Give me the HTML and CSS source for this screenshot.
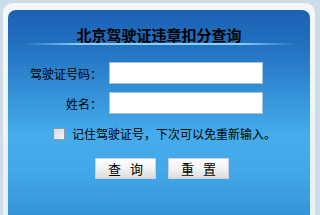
FILE: index.html
```html
<!DOCTYPE html>
<html lang="zh-CN">
<head>
    <meta charset="UTF-8">
    <title>北京驾驶证违章扣分查询</title>
    <link rel="stylesheet" href="styles.css">
</head>
<body>
    <div class="frame">
        <div class="panel">
            <h1 class="title">北京驾驶证违章扣分查询</h1>
            <div class="rule"></div>

            <form class="query-form">
                <div class="row">
                    <label for="license">驾驶证号码：</label>
                    <input type="text" id="license">
                </div>
                <div class="row">
                    <label for="name">姓名：</label>
                    <input type="text" id="name">
                </div>

                <div class="remember">
                    <input type="checkbox" id="remember">
                    <label for="remember">记住驾驶证号，下次可以免重新输入。</label>
                </div>

                <div class="buttons">
                    <button type="submit">查 询</button>
                    <button type="reset">重 置</button>
                </div>
            </form>
        </div>
    </div>
</body>
</html>
```

FILE: styles.css
```css
/* Base */
html, body {
    margin: 0;
    padding: 0;
    height: 215px;
    overflow: hidden;
    background: #cfdce8;
    font-family: "Noto Sans CJK SC", "Liberation Sans", sans-serif;
}

/* Outer light frame */
.frame {
    margin: 3px 5px 0 3px;
    padding: 7px 5px 0 5px;
    background: linear-gradient(to bottom, #f4f8fb, #e8eff5);
    border-radius: 10px 10px 0 0;
}

/* Blue panel */
.panel {
    height: 205px;
    border-radius: 8px 8px 0 0;
    background: linear-gradient(to bottom,
        #1b61b3 0px,
        #2373c2 40px,
        #3592d8 85px,
        #45aceb 125px,
        #43a8e8 160px,
        #3594d9 205px);
    overflow: hidden;
}

.title {
    margin: 0;
    padding-top: 16px;
    font-size: 15px;
    line-height: 17px;
    font-weight: bold;
    color: #000;
    text-align: center;
}

.rule {
    height: 2px;
    margin: 0 15px 0 16px;
    background: linear-gradient(to right, rgba(140, 205, 250, 0), #8ccdfa 20%, #8ccdfa 80%, rgba(140, 205, 250, 0));
}

/* Form */
.query-form {
    padding-top: 17px;
}

.row {
    display: flex;
    align-items: center;
    gap: 7px;
    padding-left: 14px;
    margin-bottom: 8px;
}

.row label {
    width: 80px;
    text-align: right;
    font-size: 12px;
    color: #000;
}

.row input {
    box-sizing: border-box;
    width: 154px;
    height: 22px;
    margin: 0;
    border: 1px solid #a9c0d2;
    background: #fff;
    font-size: 12px;
}

.remember {
    display: flex;
    align-items: center;
    gap: 7px;
    padding-left: 45px;
    margin-top: 11px;
    font-size: 12px;
    color: #000;
}

.remember input {
    appearance: none;
    -webkit-appearance: none;
    box-sizing: border-box;
    width: 12px;
    height: 12px;
    margin: 0;
    border: 1px solid #8c99a6;
    background: linear-gradient(135deg, #d4d8dc, #f4f5f6);
}

.buttons {
    display: flex;
    gap: 12px;
    padding-left: 87px;
    margin-top: 16px;
}

.buttons button {
    box-sizing: border-box;
    width: 61px;
    height: 21px;
    padding: 0;
    border: 1px solid #c6d2dc;
    background: linear-gradient(to bottom, #ffffff, #f2f2f2 50%, #dcdcdc);
    font-family: "Noto Sans CJK SC", sans-serif;
    font-size: 13px;
    word-spacing: 6px;
    color: #000;
    cursor: pointer;
}
```
